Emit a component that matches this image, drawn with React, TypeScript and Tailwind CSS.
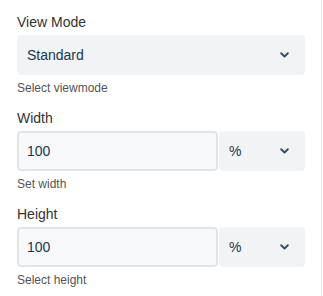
import React from 'react';

function Chevron() {
  return (
    <svg width="9" height="6" viewBox="0 0 9 6" fill="none" className="text-[#3a4d66]">
      <path d="M1.2 1.2L4.5 4.5L7.8 1.2" stroke="currentColor" strokeWidth="2" strokeLinecap="round" strokeLinejoin="round" />
    </svg>
  );
}

function SelectBox({ value, className }: { value: string; className?: string }) {
  return (
    <div className={`h-10 bg-[#f1f3f5] rounded flex items-center justify-between pl-[10px] pr-[16px] text-sm text-[#1b3553] ${className ?? ''}`}>
      <span>{value}</span>
      <Chevron />
    </div>
  );
}

function SizeField({ label, value, unit, help }: { label: string; value: string; unit: string; help: string }) {
  return (
    <div className="mb-[11px]">
      <div className="h-5 leading-5 text-sm text-[#333] mb-[3px]">{label}</div>
      <div className="flex gap-px">
        <div className="flex-1 h-10 bg-[#f7f9fb] border-2 border-[#e1e5ea] rounded-[4px] flex items-center pl-2 text-sm text-[#1b3553]">
          {value}
        </div>
        <SelectBox value={unit} className="w-[86px]" />
      </div>
      <div className="mt-1 leading-[18px] text-xs text-[#555]">{help}</div>
    </div>
  );
}

export default function App() {
  return (
    <div className="w-[322px] h-[296px] bg-white border-r border-[#e6e6e6] pt-3 pl-[17px] pr-[16px]" style={{ fontFamily: '"Liberation Sans", Arial, sans-serif' }}>
      {/* View mode */}
      <div className="mb-[11px]">
        <div className="h-5 leading-5 text-sm text-[#333] mb-[3px]">View Mode</div>
        <SelectBox value="Standard" />
        <div className="mt-1 leading-[18px] text-xs text-[#555]">Select viewmode</div>
      </div>

      <SizeField label="Width" value="100" unit="%" help="Set width" />
      <SizeField label="Height" value="100" unit="%" help="Select height" />
    </div>
  );
}
